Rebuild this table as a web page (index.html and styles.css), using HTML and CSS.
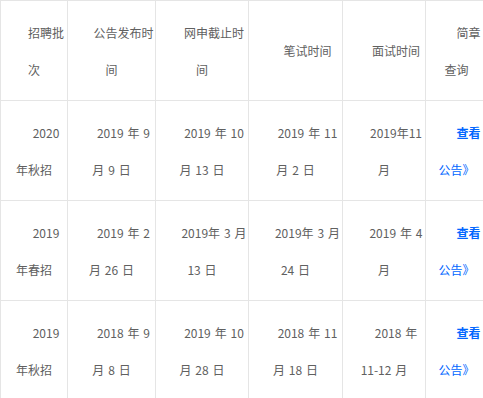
FILE: index.html
```html
<!DOCTYPE html>
<html lang="zh">
<head>
<meta charset="utf-8">
<title>招聘批次</title>
<link rel="stylesheet" href="styles.css">
</head>
<body>
<table class="recruit">
  <colgroup>
    <col class="c1"><col class="c2"><col class="c3"><col class="c4"><col class="c5"><col class="c6">
  </colgroup>
  <tbody>
    <tr>
      <td>招聘批次</td>
      <td>公告发布时间</td>
      <td>网申截止时间</td>
      <td>笔试时间</td>
      <td>面试时间</td>
      <td>简章查询</td>
    </tr>
    <tr>
      <td>2020 年秋招</td>
      <td>2019 年 9 月 9 日</td>
      <td>2019 年 10 月 13 日</td>
      <td>2019 年 11 月 2 日</td>
      <td>2019年11月</td>
      <td><a class="link" href="#"><b>查看</b>公告》</a></td>
    </tr>
    <tr>
      <td>2019 年春招</td>
      <td>2019 年 2 月 26 日</td>
      <td>2019年 3 月 13 日</td>
      <td>2019年 3 月 24 日</td>
      <td>2019 年 4 月</td>
      <td><a class="link" href="#"><b>查看</b>公告》</a></td>
    </tr>
    <tr>
      <td>2019 年秋招</td>
      <td>2018 年 9 月 8 日</td>
      <td>2019 年 10 月 28 日</td>
      <td>2018 年 11 月 18 日</td>
      <td>2018 年 11-12 月</td>
      <td><a class="link" href="#"><b>查看</b>公告》</a></td>
    </tr>
  </tbody>
</table>
</body>
</html>
```

FILE: styles.css
```css
html, body {
  margin: 0;
  padding: 0;
  background: #fff;
  overflow: hidden;
}

.recruit {
  border-collapse: collapse;
  table-layout: fixed;
  width: 487px;
  font-family: "Noto Sans CJK SC", "Noto Sans", sans-serif;
  font-size: 12px;
  color: #606060;
  word-spacing: 1.2px;
}

.c1 { width: 67px; }
.c2 { width: 88px; }
.c3 { width: 93px; }
.c4 { width: 94px; }
.c5 { width: 83px; }
.c6 { width: 62px; }

.recruit td {
  border: 1px solid #e5e5e5;
  height: 100px;
  box-sizing: border-box;
  padding: 0 1px;
  line-height: 37px;
  text-align: center;
  text-indent: 2em;
  vertical-align: middle;
}

.link {
  color: #0066ff;
  text-decoration: none;
}

.link b {
  font-weight: bold;
}
```
